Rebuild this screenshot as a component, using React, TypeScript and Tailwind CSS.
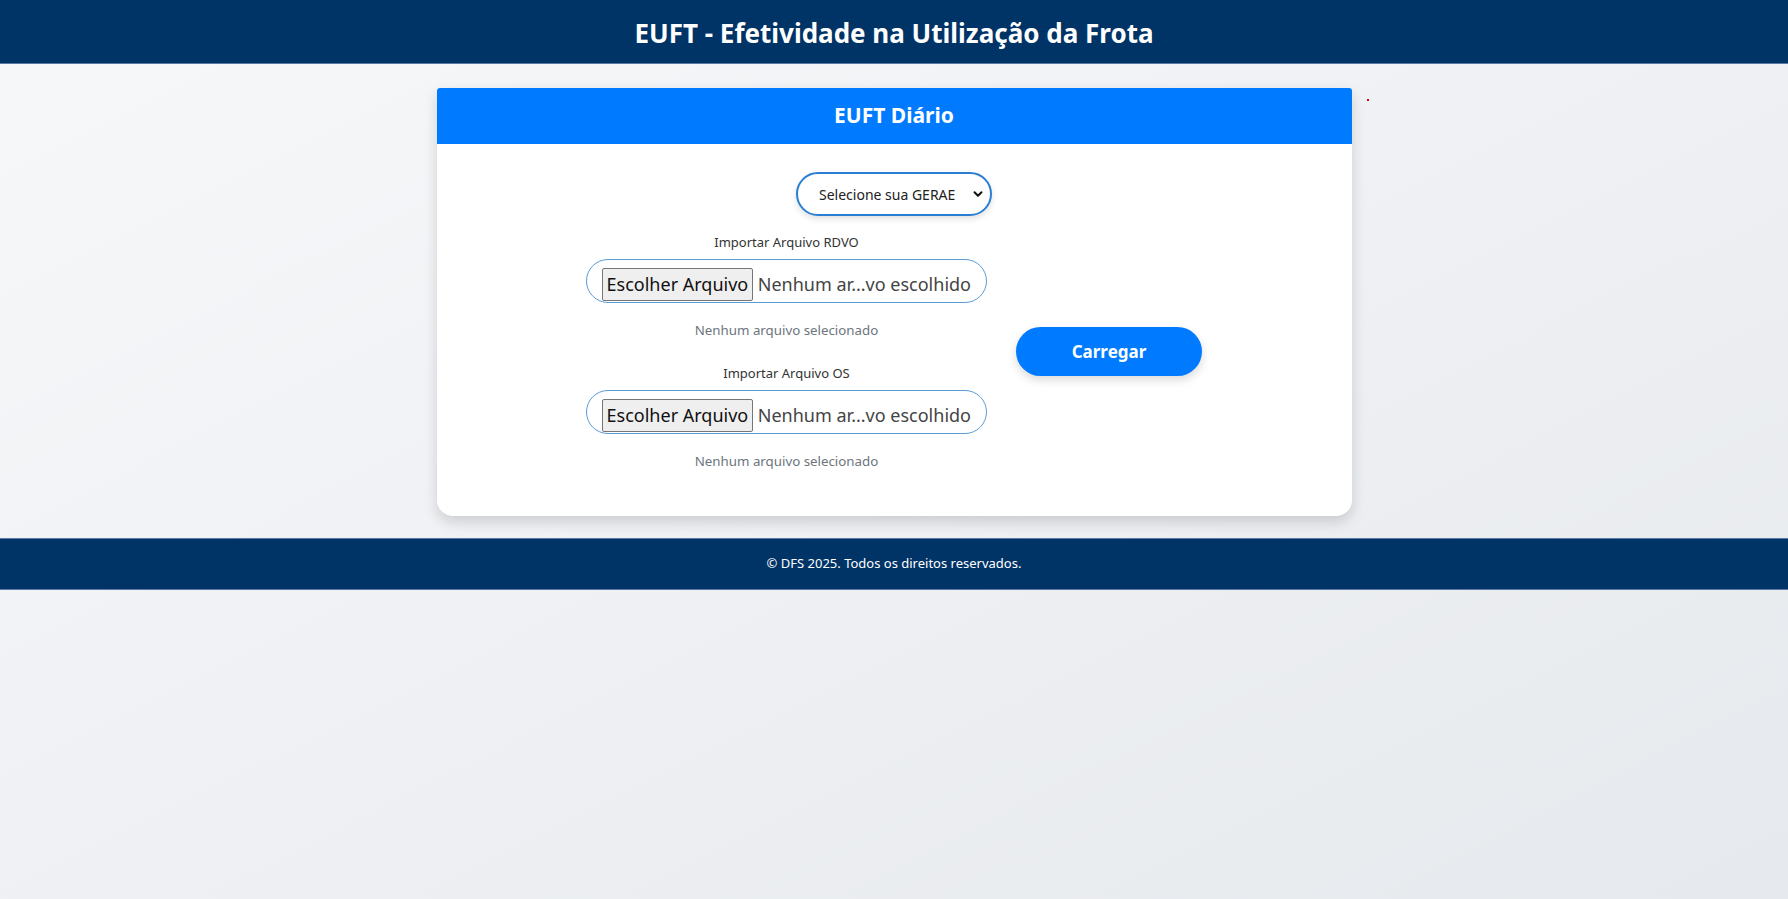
import React from 'react';

const font = { fontFamily: '"Noto Sans", "Open Sans", Arial, sans-serif' };

const FileField = ({ label }: { label: string }) => {
  return (
    <div className="flex flex-col items-center">
      <span className="text-[13px] leading-5 text-[#333333]">{label}</span>
      <label className="mt-[7px] flex h-[44px] w-[401px] cursor-pointer items-center rounded-full border border-[#5b9bd5] px-[15px] pt-[6px]">
        <input type="file" className="hidden" />
        <span className="flex h-[33px] w-[152px] items-center justify-center rounded-[2px] border border-[#767676] bg-[#efefef] text-[18px] text-[#111111]">
          Escolher Arquivo
        </span>
        <span className="ml-[5px] whitespace-nowrap text-[18px] text-[#444444]">Nenhum ar...vo escolhido</span>
      </label>
      <span className="mt-[17px] text-[13.3px] leading-5 text-[#6c757d]">Nenhum arquivo selecionado</span>
    </div>
  );
};

const App = () => {
  return (
    <div style={font} className="relative flex min-h-screen flex-col bg-gradient-to-br from-[#f7f8fa] to-[#e6e9ed]">
      {/* cabeçalho */}
      <header className="flex h-16 items-center justify-center border-b border-[#5a7aa3] bg-[#003366] pt-[3px]">
        <h1 className="text-[26px] font-bold text-white">EUFT - Efetividade na Utilização da Frota</h1>
      </header>

      <main className="pt-6 pb-[22px]">
        <div className="mx-auto w-[915px] rounded-b-2xl rounded-t-[3px] bg-white shadow-[0_6px_14px_rgba(0,0,0,0.15)]">
          <div className="flex h-14 items-center justify-center rounded-t-[3px] bg-[#007bff]">
            <h2 className="text-[21px] font-bold text-white">EUFT Diário</h2>
          </div>

          <div className="flex flex-col items-center pt-7 pb-[45px]">
            <div className="relative">
              <select className="h-[44px] w-[196px] appearance-none rounded-full border-2 border-[#2a7fd4] bg-white pl-[21px] pr-8 text-[14px] text-[#222222] shadow-[0_3px_6px_rgba(0,0,0,0.12)] outline-none">
                <option>Selecione sua GERAE</option>
              </select>
              <svg className="pointer-events-none absolute right-[9px] top-1/2 h-[10px] w-[10px] -translate-y-1/2" viewBox="0 0 10 10" fill="none">
                <path d="M1.5 3.2 L5 6.7 L8.5 3.2" stroke="#111" strokeWidth="2" strokeLinecap="round" strokeLinejoin="round" />
              </svg>
            </div>

            <div className="mt-4 flex items-center gap-[29px]">
              <div className="flex flex-col gap-[23px]">
                <FileField label="Importar Arquivo RDVO" />
                <FileField label="Importar Arquivo OS" />
              </div>
              <button className="h-[49px] w-[186px] rounded-full bg-[#007bff] text-[17px] font-bold text-white shadow-[0_4px_10px_rgba(0,0,0,0.15)]">
                Carregar
              </button>
            </div>
          </div>
        </div>
      </main>

      <footer className="flex h-[52px] items-center justify-center border-y border-[#5a7aa3] bg-[#003366]">
        <p className="text-[13px] text-white">© DFS 2025. Todos os direitos reservados.</p>
      </footer>

      <span className="absolute left-[1367px] top-[99px] h-[2px] w-[2px] bg-[#d0021b]" />
    </div>
  );
};

export default App;
